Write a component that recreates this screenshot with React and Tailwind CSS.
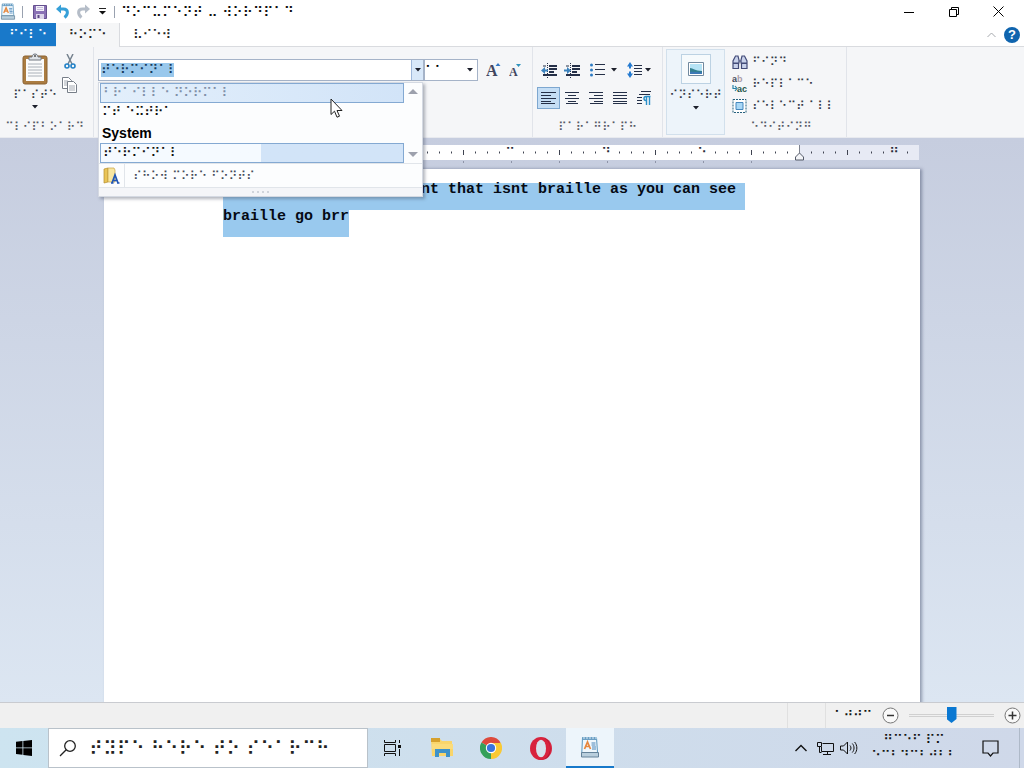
import React from "react";

const fontStack = "font-['DejaVu_Sans',sans-serif]";

function Caret({ className = "" }) {
  return (
    <svg className={className} width="6" height="4" viewBox="0 0 6 4" aria-hidden="true">
      <path d="M0 0h6L3 3.5z" fill="#1c1f2b" />
    </svg>
  );
}

function WordpadIcon({ className }) {
  return (
    <svg className={className} viewBox="0 0 18 22" aria-hidden="true">
      <path d="M1.500 1.500h14l1 15H.8z" fill="#eff8fd" stroke="#5a96bd" />
      <path d="M1.500 1h14v3h-14z" fill="#6b9fc4" />
      <path d="M3 1v2M6 1v2M9 1v2M12 1v2M15 1v2" stroke="#dcebf5" />
      <path d="M.5 16.500h17v4.500H.5z" fill="#b9cfdd" stroke="#64839a" />
      <path d="M3.500 13l3-7 3 7M4.500 10.500h4" fill="none" stroke="#e6873e" strokeWidth="1.700" />
      <path d="M10.500 7h4M10.500 9h4M11 11h4M11 13h4" stroke="#4b85b8" />
    </svg>
  );
}

function TitleBar() {
  return (
    <header className="flex h-[23px] items-center bg-white">
      <WordpadIcon className="h-[17px] w-4" />
      <span className="ml-1.5 h-3 w-px bg-gray-400" />
      <button aria-label="Save" className="ml-2.5">
        <svg width="14" height="14" viewBox="0 0 14 14">
          <path d="M.5.5h13v13h-13z" fill="#8a72b5" stroke="#65508f" />
          <path d="M3 1h8v5H3z" fill="#f4f2fa" />
          <path d="M4 2.500h6M4 4.500h6" stroke="#c5bddb" />
          <path d="M3 9h8v5H3z" fill="#dcd6ea" />
          <path d="M4.500 10h2v3h-2z" fill="#5b4784" />
        </svg>
      </button>
      <button aria-label="Undo" className="ml-2">
        <svg width="15" height="15" viewBox="0 0 15 15">
          <path d="M4.500 5h4c5 0 5 5.500 1 8.500" fill="none" stroke="#36a0d8" strokeWidth="3" />
          <path d="M1 5l5-4.500v9z" fill="#36a0d8" />
        </svg>
      </button>
      <button aria-label="Redo" className="ml-1.5">
        <svg width="15" height="15" viewBox="0 0 15 15">
          <path d="M10.500 5h-4c-5 0-5 5.500-1 8.500" fill="none" stroke="#b5bdc8" strokeWidth="3" />
          <path d="M14 5L9 .5v9z" fill="#b5bdc8" />
        </svg>
      </button>
      <button aria-label="Customize" className="ml-2">
        <svg width="7" height="8" viewBox="0 0 7 8">
          <path d="M0 .5h7" stroke="#222" />
          <path d="M0 3h7L3.500 6.500z" fill="#111" />
        </svg>
      </button>
      <span className="ml-2 h-3 w-px bg-gray-400" />
      <h1 className="ml-1.5 text-[14px] leading-[20px] text-[#111]">⠙⠕⠉⠥⠍⠑⠝⠞ ⠤ ⠺⠕⠗⠙⠏⠁⠙</h1>
      <div className="ml-auto flex h-full items-center pr-[3px]">
        <button aria-label="Minimize" className="flex w-[45px] justify-center">
          <svg width="10" height="10" viewBox="0 0 10 10"><path d="M0 5.500h10" stroke="#000" /></svg>
        </button>
        <button aria-label="Restore" className="flex w-[45px] justify-center">
          <svg width="10" height="10" viewBox="0 0 10 10" fill="none" stroke="#000">
            <path d="M.5 2.500h7v7h-7zM2.500 2.500v-2h7v7h-2" />
          </svg>
        </button>
        <button aria-label="Close" className="flex w-[45px] justify-center">
          <svg width="11" height="11" viewBox="0 0 11 11" stroke="#000"><path d="M.5.5l10 10M10.500.5l-10 10" /></svg>
        </button>
      </div>
    </header>
  );
}

function Tabs() {
  return (
    <nav className="flex h-6 items-stretch border-b border-[#d9dbdf] bg-white text-[13px] leading-[20px]">
      <button className="w-14 bg-[#1979ca] text-white">⠋⠊⠇⠑</button>
      <button className="-mb-px w-16 border-r border-[#d9dbdf] bg-[#f5f6f7] text-[#222]">⠓⠕⠍⠑</button>
      <button className="w-16 text-[#222]">⠧⠊⠑⠺</button>
      <div className="ml-auto flex items-center gap-2 pr-1">
        <button aria-label="Collapse ribbon">
          <svg width="9" height="6" viewBox="0 0 9 6" fill="none" stroke="#a5a8ad"><path d="M.5 5l4-4 4 4" /></svg>
        </button>
        <button aria-label="Help" className="flex size-4 items-center justify-center rounded-full bg-[#0f64ae] font-['Liberation_Sans',sans-serif] text-[13px] font-bold leading-[16px] text-white">
          ?
        </button>
      </div>
    </nav>
  );
}

function GroupLabel({ children }) {
  return <div className="mt-auto pr-1 text-center text-[12px] leading-[20px] text-[#555a66]">{children}</div>;
}

function ClipboardGroup() {
  return (
    <section className="flex w-[94px] flex-col border-r border-[#e1e4ea]">
      <div className="flex">
        <button className="flex w-[58px] flex-col items-center pl-3 pt-1.5 text-[12px] leading-[20px] text-[#333947]">
          <svg width="26" height="32" viewBox="0 0 26 32" aria-hidden="true">
            <rect x="1" y="3" width="24" height="28" rx="2" fill="#ab7c41" stroke="#8b6232" />
            <path d="M4 6h18v22H4z" fill="#fbfbfb" />
            <path d="M6 11h14M6 14h14M6 17h14M6 20h14M6 23h14" stroke="#aab0b8" />
            <path d="M7 7V4h3c0-4 6-4 6 0h3v3z" fill="#dfe3e8" stroke="#737982" />
            <circle cx="13" cy="3" r="1" fill="#555" />
          </svg>
          <span>⠏⠁⠎⠞⠑</span>
          <Caret />
        </button>
        <div className="flex flex-col gap-2 pl-1 pt-[7px]">
          <button aria-label="Cut">
            <svg width="16" height="15" viewBox="0 0 16 15" fill="none">
              <path d="M5 0l5 10M11 0L6 10" stroke="#76838f" strokeWidth="1.500" />
              <circle cx="5" cy="12" r="2" stroke="#2382c7" strokeWidth="1.600" />
              <circle cx="11" cy="12" r="2" stroke="#2382c7" strokeWidth="1.600" />
            </svg>
          </button>
          <button aria-label="Copy">
            <svg width="16" height="16" viewBox="0 0 16 16" fill="#fff" stroke="#777e88">
              <path d="M.5.500h6l3 3v8h-9z" />
              <path d="M2 4h4M2 6h5M2 8h5" stroke="#a5abb4" />
              <path d="M5.500 4.500h6l3 3v8h-9z" />
              <path d="M7 9h6M7 11h6M7 13h6" stroke="#a5abb4" />
            </svg>
          </button>
        </div>
      </div>
      <GroupLabel>⠉⠇⠊⠏⠃⠕⠁⠗⠙</GroupLabel>
    </section>
  );
}

function FontMenu() {
  return (
    <div className="absolute -left-px top-[22px] z-20 w-[325px] border border-[#d4d9e2] bg-[#fcfdfe] text-[13px] shadow-[2px_2px_3px_rgba(60,70,90,0.4)]">
      <div className="flex border-b border-[#e1e5ea]">
        <ul role="listbox" aria-label="Fonts" className="flex-1 text-[#111]">
          <li role="option" aria-selected="false" className="ml-px h-5 border border-[#84a9d2] bg-linear-to-r from-[#e3effb] to-[#d2e4f8] px-0.5 leading-[18px] text-[#7f90a8]">⠃⠗⠁⠊⠇⠇⠑ ⠝⠕⠗⠍⠁⠇</li>
          <li role="option" aria-selected="false" className="h-5 px-[3px] leading-[18px]">⠍⠞ ⠑⠭⠞⠗⠁</li>
          <li role="option" aria-selected="false" className="h-5 px-[3px] font-['Liberation_Sans',sans-serif] text-[14px] font-bold leading-[20px] text-black">System</li>
          <li role="option" aria-selected="true" className="ml-px h-5 border border-[#84a9d2] bg-linear-to-r from-[#f5faff] from-53% to-[#d2e4f8] to-53% px-0.5 leading-[18px]">⠞⠑⠗⠍⠊⠝⠁⠇</li>
        </ul>
        <div className="flex w-[18px] flex-col items-center justify-between py-1.5">
          <svg width="10" height="5" viewBox="0 0 10 5"><path d="M0 5h10L5 0z" fill="#9da1ad" /></svg>
          <svg width="10" height="5" viewBox="0 0 10 5"><path d="M0 0h10L5 5z" fill="#9da1ad" /></svg>
        </div>
      </div>
      <button className="flex h-6 w-full items-center border-b border-[#e1e5ea] text-[12px] text-[#444a58]">
        <span className="flex h-full w-[26px] items-center justify-center border-r border-[#e1e5ea]">
          <svg width="17" height="17" viewBox="0 0 17 17" aria-hidden="true">
            <path d="M1 2l4-1v14l-4 1z" fill="#e9c457" stroke="#b48d2b" strokeWidth=".7" />
            <path d="M5 1h6l1 2v12H5z" fill="#f8e6a0" stroke="#c5a044" strokeWidth=".7" />
            <path d="M9 16l3-8 3 8M10 13.500h4M8 16h2.500M14 16h2.500" fill="none" stroke="#2056b5" strokeWidth="1.700" />
          </svg>
        </span>
        <span className="pl-2 leading-[20px]">⠎⠓⠕⠺ ⠍⠕⠗⠑ ⠋⠕⠝⠞⠎</span>
      </button>
      <div className="flex h-2 items-center justify-center gap-[3px] bg-[#f4f5f8]">
        <i className="size-0.5 bg-gray-300" /><i className="size-0.5 bg-gray-300" /><i className="size-0.5 bg-gray-300" /><i className="size-0.5 bg-gray-300" />
      </div>
    </div>
  );
}

function FontGroup() {
  return (
    <section className="flex w-[439px] items-start border-r border-[#e1e4ea] pl-1 pt-3">
      <div className="relative flex h-[22px] w-[326px] items-center border border-[#a5b3c8] bg-white">
        <input aria-label="Font family" readOnly value="⠞⠑⠗⠍⠊⠝⠁⠇" className="ml-0.5 h-[14px] w-[73px] bg-[#99c8ec] text-[13px] leading-[14px] text-[#163a5c]" />
        <button aria-label="Open font list" className="ml-auto flex h-full w-3 items-center justify-center border-l border-[#9eb8db] bg-[#d8e8f9]"><Caret /></button>
        <FontMenu />
      </div>
      <div className="flex h-[22px] w-[54px] items-center border border-[#a5b3c8] bg-white">
        <input aria-label="Font size" readOnly value="⠁⠁" className="h-5 w-8 text-[13px]" />
        <button aria-label="Open size list" className="ml-auto mr-1"><Caret /></button>
      </div>
      <button aria-label="Grow font" className="ml-2 mt-0.5">
        <svg width="16" height="20" viewBox="0 0 16 20">
          <text x="0" y="15" fontFamily="Liberation Serif, serif" fontSize="16" fontWeight="bold" fill="#414660">A</text>
          <path d="M9.500 5h5L12 2z" fill="#3277c4" />
        </svg>
      </button>
      <button aria-label="Shrink font" className="ml-[7px] mt-0.5">
        <svg width="14" height="20" viewBox="0 0 14 20">
          <text x="0" y="15" fontFamily="Liberation Serif, serif" fontSize="12" fontWeight="bold" fill="#414660">A</text>
          <path d="M7 3h5L9.500 6z" fill="#2d92bd" />
        </svg>
      </button>
    </section>
  );
}

const alignPaths = {
  left: "M0 .5h15M0 3.500h10M0 6.500h15M0 9.500h10M0 11.500h14",
  center: "M0 .5h14M3 3.500h8M0 6.500h14M3 9.500h8M1 11.500h12",
  right: "M0 .5h14M5 3.500h9M0 6.500h14M5 9.500h9M1 11.500h13",
  justify: "M0 .5h14M0 3.500h14M0 6.500h14M0 9.500h14M0 11.500h14",
};

function Align({ kind, active }) {
  return (
    <button aria-label={"Align " + kind} aria-pressed={!!active} className={active ? "flex h-[22px] w-[23px] items-center justify-center border border-[#7da7d0] bg-[#c5def5]" : "flex h-[22px] w-[23px] items-center justify-center"}>
      <svg width="15" height="12" viewBox="0 0 15 12" stroke="#253048"><path d={alignPaths[kind]} /></svg>
    </button>
  );
}

function Indent({ label, arrow }) {
  return (
    <button aria-label={label}>
      <svg width="16" height="15" viewBox="0 0 16 15">
        <path d="M8 3h8M8 6h8M8 9h5M2 12h14" stroke="#253048" strokeWidth="1.800" />
        <path d="M6.500 0v15" stroke="#253048" strokeDasharray="1 1" />
        <path d="M2 3h3" stroke="#253048" />
        <path d={arrow} fill="#3b82bd" />
      </svg>
    </button>
  );
}

function ParagraphGroup() {
  return (
    <section className="flex w-[130px] flex-col border-r border-[#e1e4ea] pl-1">
      <div className="flex h-[46px] items-center pl-1">
        <Indent label="Decrease indent" arrow="M0 7.500L4 4v2.500h3v2H4V11z" />
        <span className="w-[7px]" />
        <Indent label="Increase indent" arrow="M7 7.500L3 4v2.500H0v2h3V11z" />
        <button aria-label="List" className="ml-2.5 flex items-center gap-1.5">
          <svg width="15" height="14" viewBox="0 0 15 14">
            <path d="M5 1.500h10M5 6.500h10M5 11.500h10" stroke="#253048" />
            <circle cx="1.500" cy="2" r="1.500" fill="#2d7bc3" /><circle cx="1.500" cy="7" r="1.500" fill="#2d7bc3" /><circle cx="1.500" cy="12" r="1.500" fill="#2d7bc3" />
          </svg>
          <Caret />
        </button>
        <button aria-label="Line spacing" className="ml-2.5 flex items-center gap-0.5">
          <svg width="16" height="16" viewBox="0 0 16 16">
            <path d="M7 3.500h8M7 6.500h8M7 9.500h8M7 12.500h8" stroke="#253048" />
            <path d="M3 0l3 4.500H4v2H2v-2H0zM3 16l3-4.500H4v-2H2v2H0z" fill="#247ad0" />
          </svg>
          <Caret />
        </button>
      </div>
      <div className="-mt-1.5 flex gap-px">
        <Align kind="left" active />
        <Align kind="center" />
        <Align kind="right" />
        <Align kind="justify" />
        <button aria-label="Paragraph settings" className="ml-1 flex items-center">
          <svg width="14" height="14" viewBox="0 0 14 14">
            <path d="M4 .5h10M2 3.500h11M0 6.500h5M0 9.500h5M0 12.500h5" stroke="#253048" />
            <path d="M9.500 14V5.500M12.500 14V5.500M13.500 5.500H9a2 2 0 000 4h.5" fill="none" stroke="#2c8fc8" strokeWidth="1.400" />
          </svg>
        </button>
      </div>
      <GroupLabel>⠏⠁⠗⠁⠛⠗⠁⠏⠓</GroupLabel>
    </section>
  );
}

function InsertGroup() {
  return (
    <section className="flex w-16 pl-[3px] pr-0.5 pt-0.5">
      <button className="flex h-[86px] w-full flex-col items-center border border-[#d2e0ec] bg-[#edf4fa] pt-1 text-[12px] leading-[22px] text-[#333947]">
        <span className="flex h-[30px] w-[30px] shrink-0 items-center justify-center border border-[#bcd2e3] bg-[#f6fafc]">
          <svg width="16" height="14" viewBox="0 0 16 14" aria-hidden="true">
            <path d="M.5.500h15v13H.5z" fill="#fff" stroke="#71899e" />
            <path d="M2 2h12v10H2z" fill="#b5e3f5" />
            <path d="M2 6c3 0 5 3 12 3v3H2z" fill="#338090" />
            <path d="M2 10c4-1 8 1 12 0v2H2z" fill="#3c78b5" />
          </svg>
        </span>
        <span>⠊⠝⠎⠑⠗⠞</span>
        <Caret />
      </button>
    </section>
  );
}

function EditingGroup() {
  return (
    <section className="flex w-[120px] flex-col border-r border-[#e1e4ea] pl-[5px] pt-1 text-[12px] text-[#333947]">
      <button className="flex h-[22px] items-center gap-1 leading-[20px]">
        <svg width="16" height="14" viewBox="0 0 16 14" aria-hidden="true" fill="#c9d2eb" stroke="#434b78" strokeWidth="1.200">
          <path d="M3.500 1h2.500l1 4v3H1V6zM10 1h2.500L15 6v2H9V5zM1 8.500h5.500v5H1zM9.500 8.500H15v5H9.500zM6.500 6h3" />
        </svg>
        ⠋⠊⠝⠙
      </button>
      <button className="flex h-[22px] items-center gap-1 leading-[20px]">
        <svg width="16" height="20" viewBox="0 0 16 20" aria-hidden="true">
          <g fontFamily="Liberation Sans, sans-serif" fontWeight="bold" fontSize="9">
            <text x="0" y="8" fill="#444b5c">a<tspan fill="#ab9ca8">b</tspan></text>
            <text x="5" y="18" fill="#24564b">ac</text>
          </g>
          <path d="M1 11v3.500h3M3 12l2 2.500-2 2.500" fill="none" stroke="#2883a8" strokeWidth="1.200" />
        </svg>
        ⠗⠑⠏⠇⠁⠉⠑
      </button>
      <button className="flex h-[22px] items-center gap-1 leading-[20px]">
        <svg width="16" height="14" viewBox="0 0 16 14" aria-hidden="true">
          <path d="M1 .5h13v13H1z" fill="#fff" stroke="#27617e" strokeDasharray="2 1" />
          <path d="M4 3.500h7v7H4z" fill="#a9d8f7" stroke="#4687bd" />
        </svg>
        ⠎⠑⠇⠑⠉⠞ ⠁⠇⠇
      </button>
      <div className="mt-auto pr-3">
        <GroupLabel>⠑⠙⠊⠞⠊⠝⠛</GroupLabel>
      </div>
    </section>
  );
}

function Ruler() {
  const ticks = Array.from({ length: 58 }, (_, i) => i).filter((i) => i % 8 !== 0);
  const labels = ["⠁", "⠃", "⠉", "⠙", "⠑", "", "⠛"];
  return (
    <div className="mx-auto w-[816px] pt-[7px]">
      <svg width="816" height="24" viewBox="0 0 816 24" className="block" aria-label="Ruler">
        <path d="M0 0h815v15H0z" fill="#e7eaf4" />
        <path d="M120 0h576v15H120z" fill="#fff" />
        {ticks.map((i) => (
          <path key={i} d={i % 4 === 0 ? "M0 5v5" : "M0 6.500v2"} transform={`translate(${119.5 + i * 12} 0)`} stroke="#3f4350" />
        ))}
        {[1, 2, 3, 4, 5, 6, 7, 8, 9, 10, 11].map((i) => (
          <path key={i} d="M0 16v2" transform={`translate(${119.5 + i * 48} 0)`} stroke="#8e94a8" />
        ))}
        {labels.map((l, i) => (
          <text key={i} x={214 + i * 96} y="12" textAnchor="middle" fontSize="13" fill="#252a38">{l}</text>
        ))}
        <path d="M695.500 0v8" stroke="#7d828e" />
        <path d="M691.500 15v-3l4-4 4 4v3z" fill="#f4f5f8" stroke="#555b69" />
      </svg>
    </div>
  );
}

function StatusBar() {
  return (
    <footer className="flex h-[26px] shrink-0 items-center justify-end border-t border-[#c9cbd0] bg-[#f0f0f0]">
      <span className="h-full w-px bg-[#e0e0e0]" />
      <span className="ml-[37px] h-full w-px bg-[#e0e0e0]" />
      <span className="w-14 pl-2 text-[13px] leading-[20px] text-[#111]">⠁⠚⠚⠉</span>
      <button aria-label="Zoom out" className="flex">
        <svg width="17" height="17" viewBox="0 0 17 17"><circle cx="8.500" cy="8.500" r="7.500" fill="#f9f9f9" stroke="#777" /><path d="M5 8.500h7" stroke="#333" strokeWidth="1.500" /></svg>
      </button>
      <input
        type="range"
        aria-label="Zoom"
        defaultValue="50"
        className="ml-2.5 h-[17px] w-[85px] appearance-none bg-transparent [&::-webkit-slider-runnable-track]:h-[3px] [&::-webkit-slider-runnable-track]:border-y [&::-webkit-slider-runnable-track]:border-[#d0d0d0] [&::-webkit-slider-thumb]:-mt-2 [&::-webkit-slider-thumb]:h-4 [&::-webkit-slider-thumb]:w-2.5 [&::-webkit-slider-thumb]:appearance-none [&::-webkit-slider-thumb]:bg-[#0a78d2] [&::-webkit-slider-thumb]:[clip-path:polygon(0_0,100%_0,100%_75%,50%_100%,0_75%)]"
      />
      <button aria-label="Zoom in" className="ml-2.5 mr-[3px] flex">
        <svg width="17" height="17" viewBox="0 0 17 17"><circle cx="8.500" cy="8.500" r="7.500" fill="#f9f9f9" stroke="#777" /><path d="M4.500 8.500h8M8.500 4.500v8" stroke="#333" strokeWidth="1.500" /></svg>
      </button>
    </footer>
  );
}

function Taskbar() {
  return (
    <div className="flex h-10 shrink-0 items-stretch bg-linear-to-r from-[#cde4f0] to-[#cfd8e9]">
      <button aria-label="Start" className="flex w-12 items-center justify-center">
        <svg width="16" height="16" viewBox="0 0 16 16"><path d="M0 1.800L6.500 1v6.500H0zM7.300.9L16 0v7.500H7.300zM0 8.300h6.500v6.500L0 14zM7.300 8.300H16V16l-8.700-1.100z" /></svg>
      </button>
      <label className="flex w-80 items-center gap-3 border border-[#b9c2ca] bg-white pl-2.5">
        <svg width="18" height="18" viewBox="0 0 18 18" fill="none" stroke="#222" strokeWidth="1.300"><circle cx="11" cy="7" r="5.300" /><path d="M7.200 10.800L1 17" /></svg>
        <input aria-label="Search" placeholder="⠞⠽⠏⠑ ⠓⠑⠗⠑ ⠞⠕ ⠎⠑⠁⠗⠉⠓" className="h-7 min-w-0 flex-1 text-[19px] placeholder:text-[#222]" />
      </label>
      <button aria-label="Task view" className="flex w-12 items-center justify-center">
        <svg width="17" height="16" viewBox="0 0 17 16" fill="none" stroke="#111"><path d="M.5 0v2.500h11V0M.5 16v-2.500h11V16M.5 4.500h11v7H.5zM15.500 0v3M15.500 9v7" /><path d="M14 5h3v3h-3z" fill="#111" stroke="none" /></svg>
      </button>
      <button aria-label="File Explorer" className="ml-0.5 flex w-12 items-center justify-center">
        <svg width="23" height="20" viewBox="0 0 23 20"><path d="M0 1h9l2 2h10v3h1v12H1z" fill="#f9d56b" /><path d="M0 0h9v4H0z" fill="#d6a12d" /><path d="M1 6h21v5H1z" fill="#fbdc7b" /><path d="M4 11h15v8h-4v-4H8v4H4z" fill="#3e92c9" /></svg>
      </button>
      <button aria-label="Chrome" className="flex w-[50px] items-center justify-center">
        <svg width="22" height="22" viewBox="0 0 22 22"><path d="M11 11L1.470 5.500A11 11 0 0120.530 5.500z" fill="#dd4a3c" /><path d="M11 11L20.530 5.500A11 11 0 0111 22z" fill="#f9c934" /><path d="M11 11v11A11 11 0 011.470 5.500z" fill="#35a05a" /><path d="M11 6h9.800l.5 1-5 7-5.300 8 1-8z" fill="#f9c934" /><circle cx="11" cy="11" r="5.200" fill="#fff" /><circle cx="11" cy="11" r="4.100" fill="#3974dd" /></svg>
      </button>
      <button aria-label="Opera" className="flex w-[50px] items-center justify-center">
        <svg width="22" height="23" viewBox="0 0 22 23"><ellipse cx="11" cy="11.500" rx="11" ry="11.500" fill="#d8233d" /><path d="M14 1c4 2 6 6 6 10.500S18 20 14 22c9-1 8-20 0-21z" fill="#a91630" /><ellipse cx="11" cy="11.500" rx="5" ry="8.800" fill="#d5e2ec" /></svg>
      </button>
      <button aria-label="WordPad" className="flex w-12 items-center justify-center border-b-2 border-[#1779ca] bg-[#edf5fb]"><WordpadIcon className="h-[22px] w-[18px]" /></button>
      <div className="ml-auto flex items-center pr-1 text-[#111]">
        <button aria-label="Hidden icons"><svg width="12" height="8" viewBox="0 0 12 8" fill="none" stroke="#111" strokeWidth="1.400"><path d="M.5 7L6 1.500 11.500 7" /></svg></button>
        <button aria-label="Network" className="ml-2.5"><svg width="17" height="15" viewBox="0 0 17 15" fill="none" stroke="#111"><path d="M5.500 2.500h11v8h-12V6M10.500 10.500v3M6 13.500h8M.5 1.500h4v4h-4zM2.500 5.500v6h2" /></svg></button>
        <button aria-label="Volume" className="ml-1.5"><svg width="18" height="14" viewBox="0 0 18 14" fill="none" stroke="#111"><path d="M.5 5v4h3l4 4V1l-4 4zM10 4.500c1.300 1.500 1.300 3.500 0 5M12.300 2.500c2.300 2.600 2.300 6.400 0 9M14.600 1c3 3.400 3 8.600 0 12" /></svg></button>
        <time className="ml-2.5 w-[92px] text-center text-[13px] leading-[16px]">
          ⠛⠉⠑⠋ ⠏⠍<br />⠑⠉⠃⠙⠉⠃⠚⠃⠃
        </time>
        <button aria-label="Notifications" className="ml-[22px]"><svg width="17" height="17" viewBox="0 0 17 17" fill="none" stroke="#111" strokeWidth="1.200"><path d="M1 1h15v12h-5l-2.500 3L6 13H1z" /></svg></button>
        <span className="ml-5 h-10 w-px bg-[#aeb9c8]" />
      </div>
    </div>
  );
}

export default function App() {
  return (
    <div className={`relative flex h-screen flex-col overflow-hidden ${fontStack}`}>
      <TitleBar />
      <Tabs />
      <div className="flex h-[91px] shrink-0 border-b border-[#e8eaef] bg-[#f5f6f8]">
        <ClipboardGroup />
        <FontGroup />
        <ParagraphGroup />
        <InsertGroup />
        <EditingGroup />
      </div>
      <main className="min-h-0 flex-1 overflow-hidden bg-linear-to-b from-[#c6cddf] to-[#dce6f2]">
        <Ruler />
        <article className="mx-auto h-full w-[816px] bg-white pl-[119px] pt-3.5 font-['Liberation_Mono',monospace] text-[15px] font-bold leading-[13px] text-[#050a14] shadow-[2px_0_3px_rgba(70,80,110,0.5)]">
          <p className="h-[27px] w-[522px] whitespace-pre bg-[#99c9ee] pl-[198px]">nt that isnt braille as you can see </p>
          <p className="h-[27px] w-fit bg-[#99c9ee]">braille go brr</p>
        </article>
      </main>
      <StatusBar />
      <Taskbar />
      <svg className="pointer-events-none absolute left-[330px] top-[98px] z-30" width="13" height="21" viewBox="0 0 13 21" aria-hidden="true">
        <path d="M1 1v15.500l3.500-3.300 2.500 6 2.500-1-2.500-5.700h5z" fill="#fff" stroke="#222" />
      </svg>
    </div>
  );
}
